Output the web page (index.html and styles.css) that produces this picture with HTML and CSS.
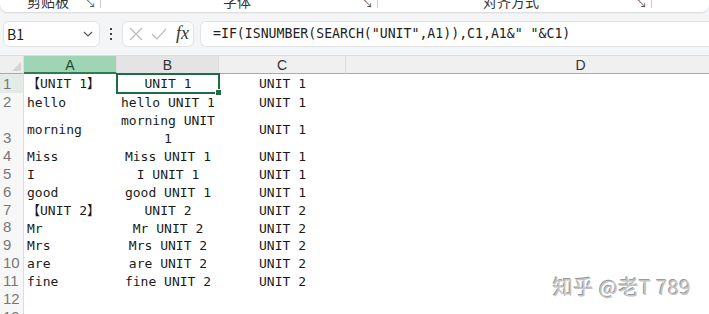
FILE: index.html
```html
<!DOCTYPE html>
<html lang="zh-CN">
<head>
    <meta charset="UTF-8">
    <title>UNIT</title>
    <link rel="stylesheet" href="styles.css">
</head>
<body>

    <div class="ribbon">
        <div class="group g1"><span class="label">剪贴板</span><span class="launch">↘</span></div>
        <div class="group g2"><span class="label">字体</span><span class="launch">↘</span></div>
        <div class="group g3"><span class="label">对齐方式</span><span class="launch">↘</span></div>
    </div>

    <div class="formula-bar">
        <div class="name-box">
            <span>B1</span>
            <svg width="10" height="6" viewBox="0 0 10 6"><path d="M1 1 L5 5 L9 1" fill="none" stroke="#555" stroke-width="1.2"/></svg>
        </div>
        <div class="dots"><i></i><i></i><i></i></div>
        <div class="fx-box">
            <svg width="14" height="14" viewBox="0 0 14 14"><path d="M1 1 L13 13 M13 1 L1 13" stroke="#bbb" stroke-width="1.2"/></svg>
            <svg width="16" height="14" viewBox="0 0 16 14"><path d="M1 7 L6 12 L15 2" fill="none" stroke="#bbb" stroke-width="1.2"/></svg>
            <span class="fx">fx</span>
        </div>
        <div class="formula">=IF(ISNUMBER(SEARCH("UNIT",A1)),C1,A1&amp;" "&amp;C1)</div>
    </div>

    <div class="sheet">
        <div class="corner"></div>
        <div class="col-head active">A</div>
        <div class="col-head sel">B</div>
        <div class="col-head">C</div>
        <div class="col-head">D</div>

        <div class="row-head current">1</div>
        <div class="cell">【UNIT 1】</div>
        <div class="cell mid selected">UNIT 1</div>
        <div class="cell mid">UNIT 1</div>
        <div class="cell"></div>

        <div class="row-head">2</div>
        <div class="cell">hello</div>
        <div class="cell mid">hello UNIT 1</div>
        <div class="cell mid">UNIT 1</div>
        <div class="cell"></div>

        <div class="row-head tall">3</div>
        <div class="cell tall">morning</div>
        <div class="cell mid tall">morning UNIT 1</div>
        <div class="cell mid tall">UNIT 1</div>
        <div class="cell tall"></div>

        <div class="row-head">4</div>
        <div class="cell">Miss</div>
        <div class="cell mid">Miss UNIT 1</div>
        <div class="cell mid">UNIT 1</div>
        <div class="cell"></div>

        <div class="row-head">5</div>
        <div class="cell">I</div>
        <div class="cell mid">I UNIT 1</div>
        <div class="cell mid">UNIT 1</div>
        <div class="cell"></div>

        <div class="row-head">6</div>
        <div class="cell">good</div>
        <div class="cell mid">good UNIT 1</div>
        <div class="cell mid">UNIT 1</div>
        <div class="cell"></div>

        <div class="row-head">7</div>
        <div class="cell">【UNIT 2】</div>
        <div class="cell mid">UNIT 2</div>
        <div class="cell mid">UNIT 2</div>
        <div class="cell"></div>

        <div class="row-head">8</div>
        <div class="cell">Mr</div>
        <div class="cell mid">Mr UNIT 2</div>
        <div class="cell mid">UNIT 2</div>
        <div class="cell"></div>

        <div class="row-head">9</div>
        <div class="cell">Mrs</div>
        <div class="cell mid">Mrs UNIT 2</div>
        <div class="cell mid">UNIT 2</div>
        <div class="cell"></div>

        <div class="row-head">10</div>
        <div class="cell">are</div>
        <div class="cell mid">are UNIT 2</div>
        <div class="cell mid">UNIT 2</div>
        <div class="cell"></div>

        <div class="row-head">11</div>
        <div class="cell">fine</div>
        <div class="cell mid">fine UNIT 2</div>
        <div class="cell mid">UNIT 2</div>
        <div class="cell"></div>

        <div class="row-head">12</div>
        <div class="cell"></div>
        <div class="cell"></div>
        <div class="cell"></div>
        <div class="cell"></div>

        <div class="row-head">13</div>
        <div class="cell"></div>
        <div class="cell"></div>
        <div class="cell"></div>
        <div class="cell"></div>
    </div>

    <div class="watermark">知乎 @老T 789</div>

</body>
</html>
```

FILE: styles.css
```css
body { margin: 0; width: 709px; height: 314px; overflow: hidden; background: #f4f5f6; font-family: "Noto Sans CJK SC", "Noto Sans", sans-serif; position: relative; }

.ribbon { display: flex; height: 12px; background: #fff; border-radius: 0 0 8px 8px; box-shadow: 0 1px 2px rgba(0,0,0,0.12); overflow: hidden; }
.group { display: flex; justify-content: space-between; border-right: 1px solid #ccc; height: 8px; }
.g1 { width: 101px; padding-left: 27px; box-sizing: border-box; }
.g2 { width: 277px; padding-left: 122px; box-sizing: border-box; }
.g3 { width: 274px; padding-left: 105px; box-sizing: border-box; }
.label, .launch { font-size: 14px; line-height: 14px; margin-top: -6px; color: #333; }
.launch { font-size: 11px; margin-top: -4px; margin-right: 4px; color: #555; }

.formula-bar { display: flex; align-items: center; height: 43px; padding: 0 0 0 3px; }
.name-box { width: 97px; height: 26px; box-sizing: border-box; background: #fff; border: 1px solid #e3e3e3; border-radius: 6px; display: flex; align-items: center; justify-content: space-between; padding: 0 6px 0 3px; font-size: 14px; color: #222; }
.dots { width: 22px; display: flex; flex-direction: column; align-items: center; gap: 3px; }
.dots i { width: 2px; height: 2px; background: #444; display: block; }
.fx-box { width: 72px; height: 26px; box-sizing: border-box; background: #fff; border: 1px solid #e3e3e3; border-radius: 6px; display: flex; align-items: center; gap: 8px; padding-left: 6px; }
.fx { font-family: "Liberation Serif", serif; font-style: italic; font-size: 18px; color: #333; margin-left: 1px; }
.formula { flex: 1; margin-left: 6px; height: 26px; box-sizing: border-box; background: #fff; border: 1px solid #e3e3e3; border-right: none; border-radius: 6px 0 0 6px; padding-left: 12px; font-family: "DejaVu Sans Mono", monospace; font-size: 13.2px; line-height: 24px; color: #222; white-space: nowrap; }

.sheet { display: grid; grid-template-columns: 24px 93px 102px 127px 470px; grid-template-rows: 18px 18.5px 18.5px 36px repeat(10, 17.9px); background: #fff; border-top: 1px solid #d8dde2; font-family: "DejaVu Sans Mono", monospace; font-size: 13px; color: #1a1a1a; }
.corner { background: #efefef; border-bottom: 1px solid #aaa; border-right: 1px solid #ddd; position: relative; }
.corner::after { content: ""; position: absolute; right: 2px; bottom: 2px; border-left: 9px solid transparent; border-bottom: 9px solid #d4d4d4; }
.col-head { background: #f0f0f0; border-bottom: 1px solid #aaa; border-right: 1px solid #ddd; text-align: center; font-family: "Liberation Sans", sans-serif; font-size: 14px; line-height: 18px; color: #333; }
.col-head.active { background: #9fd5b5; border-bottom: 2px solid #2e7d50; color: #1b4d30; }
.col-head.sel { background: #e4e4e4; }
.row-head { background: #f7f7f7; border-right: 1px solid #ddd; color: #777; font-family: "Liberation Sans", sans-serif; font-size: 15px; display: flex; align-items: flex-end; padding: 1px 0 0 3px; line-height: 18px; }
.row-head.current { background: #e3ebe6; }
.cell { display: flex; align-items: center; padding: 2px 3px 0; line-height: 18px; white-space: nowrap; }
.cell.mid { justify-content: center; text-align: center; white-space: normal; }
.cell.selected { outline: 2px solid #1f6b43; outline-offset: -1px; position: relative; }
.cell.selected::after { content: ""; position: absolute; right: -3px; bottom: -3px; width: 5px; height: 5px; background: #1f6b43; border: 1px solid #fff; }

.watermark { position: absolute; left: 553px; top: 272px; font-size: 20px; color: #c4c4c4; text-shadow: 1px 1px 0 #fff, -1px -1px 0 #999; letter-spacing: 0.5px; }
```
